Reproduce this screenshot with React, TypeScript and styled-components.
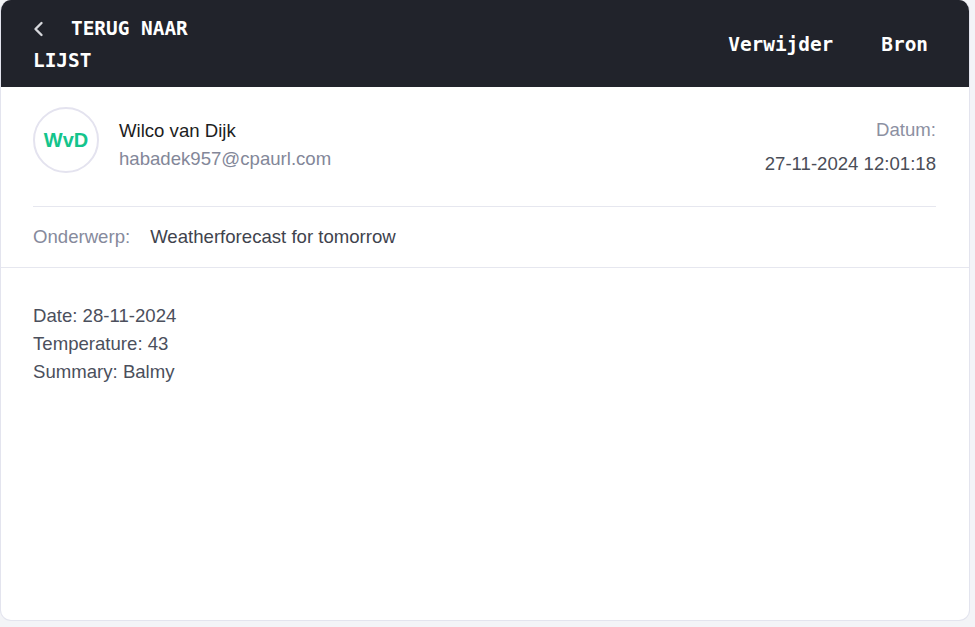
import React from "react";
import styled, { createGlobalStyle } from "styled-components";

const Global = createGlobalStyle`
  html, body { margin: 0; padding: 0; background: #f3f4f7; }
  body { font-family: "Liberation Sans", Arial, sans-serif; }
  * { box-sizing: border-box; }
`;

const Card = styled.div`
  width: 970px;
  height: 621px;
  background: #ffffff;
  border: 1px solid #e3e4ee;
  border-top: none;
  border-radius: 11px;
  overflow: hidden;
  display: flex;
  flex-direction: column;
`;

const TopBar = styled.header`
  height: 87px;
  background: #21232b;
  display: flex;
  align-items: center;
  justify-content: space-between;
  padding: 2px 41px 0 32px;
  font-family: "DejaVu Sans Mono", monospace;
  font-weight: bold;
  font-size: 19.4px;
  color: #ffffff;
`;

const BackButton = styled.div`
  width: 170px;
  line-height: 32px;
`;

const Chevron = styled.span`
  display: inline-block;
  width: 38px;
  height: 32px;
  vertical-align: top;
  color: #d6d7dc;
  svg {
    display: block;
    margin-top: 8px;
  }
`;

const Actions = styled.nav`
  display: flex;
  gap: 48px;
`;

const Action = styled.span`
  line-height: 32px;
`;

const Meta = styled.section`
  padding: 20px 33px 0 32px;
`;

const MetaTop = styled.div`
  display: flex;
  justify-content: space-between;
  padding-bottom: 28px;
  border-bottom: 1px solid #e6e7ef;
`;

const Sender = styled.div`
  display: flex;
  align-items: flex-start;
  gap: 20px;
`;

const Avatar = styled.div`
  width: 66px;
  height: 66px;
  border-radius: 50%;
  border: 2px solid #e4e3ef;
  display: flex;
  align-items: center;
  justify-content: center;
  color: #14c48c;
  font-weight: bold;
  font-size: 20px;
`;

const SenderText = styled.div`
  padding-top: 10px;
  font-size: 18.6px;
  line-height: 28px;
`;

const Name = styled.div`
  color: #1c1d22;
`;

const Email = styled.div`
  color: #838799;
`;

const DateBlock = styled.div`
  text-align: right;
  padding-top: 9px;
  font-size: 18.6px;
  line-height: 28px;
`;

const DateLabel = styled.div`
  color: #8c90a2;
`;

const DateValue = styled.div`
  color: #4a4d57;
  margin-top: 6px;
`;

const SubjectRow = styled.div`
  display: flex;
  gap: 20px;
  padding: 16px 0 16px;
  font-size: 18.6px;
  line-height: 28px;
`;

const SubjectLabel = styled.span`
  color: #868a9c;
`;

const SubjectValue = styled.span`
  color: #40434d;
`;

const Divider = styled.div`
  height: 1px;
  background: #e6e7ef;
`;

const Body = styled.section`
  padding: 34px 32px;
  font-size: 18.6px;
  line-height: 28px;
  color: #4b4f5c;
`;

export default function App() {
  return (
    <>
      <Global />
      <Card>
        <TopBar>
          <BackButton>
            <Chevron>
              <svg width="12" height="16" viewBox="0 0 12 16" fill="none">
                <path d="M8.5 2 L2.5 8 L8.5 14" stroke="currentColor" strokeWidth="2.4" strokeLinecap="round" strokeLinejoin="round" />
              </svg>
            </Chevron>
            TERUG NAAR LIJST
          </BackButton>
          <Actions>
            <Action>Verwijder</Action>
            <Action>Bron</Action>
          </Actions>
        </TopBar>
        <Meta>
          <MetaTop>
            <Sender>
              <Avatar>WvD</Avatar>
              <SenderText>
                <Name>Wilco van Dijk</Name>
                <Email>habadek957@cpaurl.com</Email>
              </SenderText>
            </Sender>
            <DateBlock>
              <DateLabel>Datum:</DateLabel>
              <DateValue>27-11-2024 12:01:18</DateValue>
            </DateBlock>
          </MetaTop>
          <SubjectRow>
            <SubjectLabel>Onderwerp:</SubjectLabel>
            <SubjectValue>Weatherforecast for tomorrow</SubjectValue>
          </SubjectRow>
        </Meta>
        <Divider />
        <Body>
          <div>Date: 28-11-2024</div>
          <div>Temperature: 43</div>
          <div>Summary: Balmy</div>
        </Body>
      </Card>
    </>
  );
}
